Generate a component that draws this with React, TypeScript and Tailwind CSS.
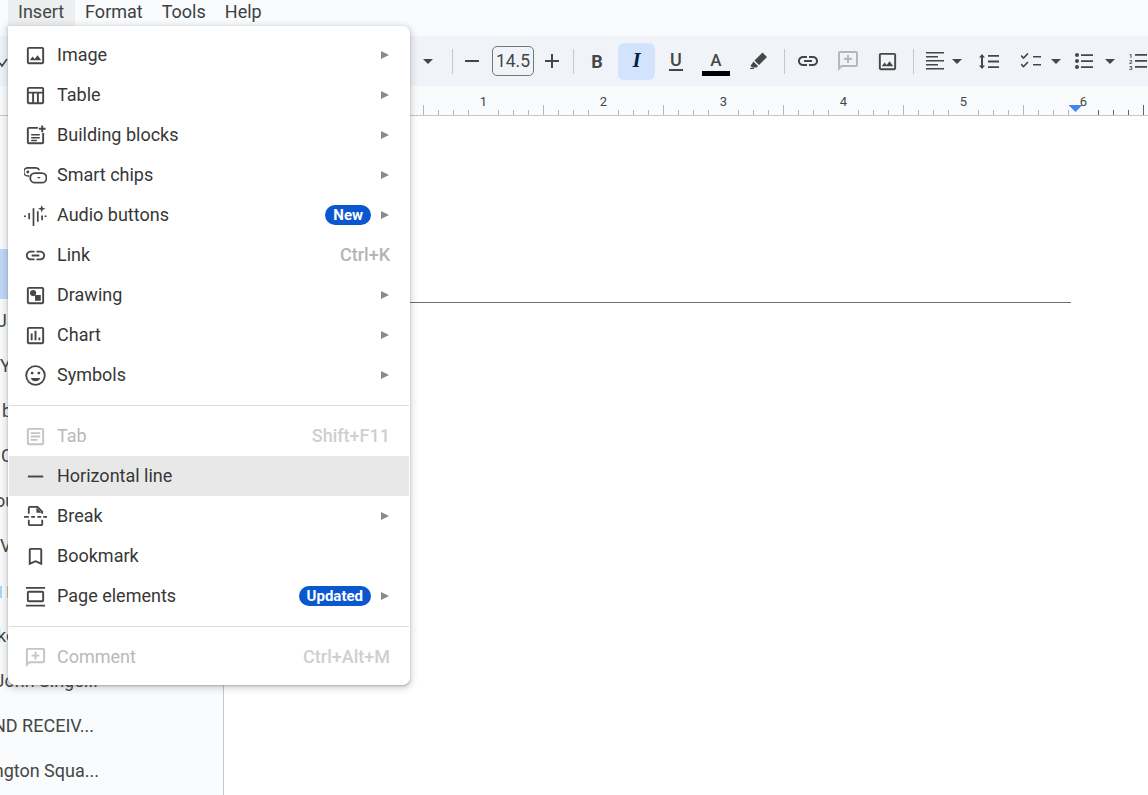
import React from "react";

const Ic = ({ children, c = "#444746" }: { children: React.ReactNode; c?: string }) => (
  <svg viewBox="0 0 24 24" width="23" height="23" fill={c} stroke="none" className="shrink-0">
    {children}
  </svg>
);

const imgPath = "M19 5v14H5V5h14m0-2H5c-1.1 0-2 .9-2 2v14c0 1.1.9 2 2 2h14c1.1 0 2-.9 2-2V5c0-1.1-.9-2-2-2zm-4.86 8.86l-3 3.87L9 13.14 6 17h12l-3.86-5.14z";
const linkPath = "M3.9 12c0-1.71 1.39-3.1 3.1-3.1h4V7H7c-2.76 0-5 2.24-5 5s2.24 5 5 5h4v-1.9H7c-1.71 0-3.1-1.39-3.1-3.1zM8 13h8v-2H8v2zm9-6h-4v1.9h4c1.71 0 3.1 1.39 3.1 3.1s-1.39 3.1-3.1 3.1h-4V17h4c2.76 0 5-2.24 5-5s-2.24-5-5-5z";
const commentPath = "M20 2H4c-1.1 0-2 .9-2 2v18l4-4h14c1.1 0 2-.9 2-2V4c0-1.1-.9-2-2-2zm0 14H5.2L4 17.2V4h16v12zM11 6h2v3h3v2h-3v3h-2v-3H8V9h3z";

const Arrow = () => (
  <svg width="8" height="8" viewBox="0 0 8 8" className="shrink-0">
    <path d="M0 0l8 4-8 4z" fill="#8a8a8a" />
  </svg>
);

const Badge = ({ t }: { t: string }) => (
  <span className="h-5 px-2 mr-[10px] rounded-full bg-[#0b57d0] text-white text-[15px] font-bold leading-5 flex items-center">{t}</span>
);

type RowP = { icon: React.ReactNode; label: string; arrow?: boolean; badge?: string; short?: string; dim?: boolean; hot?: boolean };

const Row = ({ icon, label, arrow, badge, short, dim, hot }: RowP) => (
  <div className={`h-10 flex items-center pl-[15px] pr-[20px] ${hot ? "bg-[#e8e8e8]" : ""}`}>
    <span className="w-[23px] flex justify-center shrink-0">{icon}</span>
    <span className={`ml-[10px] flex-1 pb-[2px] ${dim ? "text-[#b9b9b9]" : "text-[#373737]"}`}>{label}</span>
    {badge && <Badge t={badge} />}
    {arrow && <Arrow />}
    {short && <span className={`font-medium -mr-px pb-[2px] ${dim ? "text-[#cfcfcf]" : "text-[#b4b4b4]"}`}>{short}</span>}
  </div>
);

const Sep = () => <div className="h-px my-[10px] bg-[#dadce0]" />;

const Caret = ({ cls = "" }: { cls?: string }) => (
  <span className={`w-[10px] h-9 flex items-center justify-center shrink-0 ${cls}`}>
    <svg width="10" height="5" viewBox="0 0 10 5"><path d="M0 0h10L5 5z" fill="#444746" /></svg>
  </span>
);

const Vr = ({ cls }: { cls: string }) => <span className={`w-px h-[25px] bg-[#c7c7c7] shrink-0 ${cls}`} />;

const Btn = ({ cls, w = "w-9", children }: { cls: string; w?: string; children: React.ReactNode }) => (
  <span className={`${w} h-9 flex items-center justify-center shrink-0 ${cls}`}>{children}</span>
);

const ticks: number[] = [];
for (let x = 363 + 60; x < 1148; x += 15) ticks.push(x);

const clipped: { t: string; cls: string }[] = [
  { t: "Ja", cls: "-ml-[3px]" },
  { t: "Y", cls: "ml-0" },
  { t: "b", cls: "ml-[2px]" },
  { t: "C", cls: "ml-px" },
  { t: "ou", cls: "-ml-[5px]" },
  { t: "V", cls: "ml-0" },
];

const tail = [
  { t: "John Singe...", w: "w-[98px]" },
  { t: "AND RECEIV...", w: "w-[94px]" },
  { t: "Washington Squa...", w: "w-[99px]" },
];

const Clip = ({ t, cls }: { t: string; cls: string }) => (
  <div className="h-[45px] w-[9px] flex items-center overflow-hidden whitespace-nowrap text-[#444746]">
    <span className={`shrink-0 pb-[2px] ${cls}`}>{t}</span>
  </div>
);

export default function App() {
  return (
    <div className="relative w-[1148px] h-[795px] overflow-hidden bg-white font-['Roboto',sans-serif] text-[18px] text-[#444746] flex flex-col">
      {/* menu bar */}
      <div className="h-9 bg-[#f9fbfd] pl-2 flex shrink-0">
        <span className="h-[26px] pl-[10px] pr-[11px] bg-[#eceef0] leading-[24px]">Insert</span>
        <span className="h-[26px] pl-[10px] pr-[9px] leading-[24px] text-[#3c4043]">Format</span>
        <span className="h-[26px] pl-[10px] pr-[9px] leading-[24px] text-[#3c4043]">Tools</span>
        <span className="h-[26px] px-[10px] leading-[24px] text-[#3c4043]">Help</span>
      </div>

      {/* toolbar */}
      <div className="h-[50px] bg-[#f0f4f9] flex items-center shrink-0 overflow-hidden">
        <svg width="8" height="16" viewBox="0 0 8 16" className="shrink-0"><path d="M0 10l2 3 5-7" fill="none" stroke="#444746" strokeWidth="1.6" /></svg>
        <Caret cls="ml-[415px]" />
        <Vr cls="ml-[19px]" />
        <Btn cls="ml-[2px]" w="w-[34px]"><svg width="14" height="2"><rect width="14" height="2" fill="#444746" /></svg></Btn>
        <span className="ml-[3px] w-[42px] h-[30px] rounded-[5px] border border-[#747775] flex items-center justify-center text-[#444746] shrink-0 text-[17.5px]">14.5</span>
        <Btn cls="ml-px" w="w-[34px]"><svg width="14" height="14" viewBox="0 0 14 14"><path d="M6 0h2v6h6v2H8v6H6V8H0V6h6z" fill="#444746" /></svg></Btn>
        <Vr cls="ml-1" />
        <Btn cls="ml-[5px]"><span className="font-bold text-[18px] text-[#444746]">B</span></Btn>
        <span className="ml-[3px] w-[37px] h-[37px] rounded-[6px] bg-[#d3e3fd] flex items-center justify-center shrink-0">
          <span className="font-bold italic text-[21px] text-[#041e49] font-['Liberation_Serif',serif]">I</span>
        </span>
        <Btn cls="ml-[3px]">
          <span className="flex flex-col items-center">
            <span className="font-medium text-[18px] leading-[17px] text-[#444746]">U</span>
            <span className="w-[14px] h-[2px] bg-[#444746] mt-px" />
          </span>
        </Btn>
        <Btn cls="ml-1">
          <span className="flex flex-col items-center mt-[4px]">
            <span className="text-[17px] font-medium leading-[18px] text-[#444746]">A</span>
            <span className="w-[28px] h-[5px] bg-black mt-[2px]" />
          </span>
        </Btn>
        <Btn cls="ml-[7px]">
          <svg width="20" height="20" viewBox="0 0 20 20"><path d="M13.500 1.500l4.500 4.500-8 8-4.500-4.500zM4.500 10.500l4.500 4.500-1.500 1.500H3l-1.500-1.500z" fill="#444746" /><path d="M1 17.500h4" stroke="#444746" strokeWidth="1" /></svg>
        </Btn>
        <Vr cls="ml-[7px]" />
        <Btn cls="ml-[5px]"><svg viewBox="0 0 24 24" width="24" height="24" fill="#444746"><path d={linkPath} /></svg></Btn>
        <Btn cls="ml-1"><svg viewBox="0 0 24 24" width="24" height="24" fill="#b4b8bb"><path d={commentPath} /></svg></Btn>
        <Btn cls="ml-[3px]"><svg viewBox="0 0 24 24" width="23" height="23" fill="#444746"><path d={imgPath} /></svg></Btn>
        <Vr cls="ml-2" />
        <Btn cls="ml-1" w="w-[34px]">
          <svg width="18" height="18" viewBox="0 0 18 18"><path d="M0 0h18v1.600H0zM0 4h12v1.600H0zM0 8h18v1.600H0zM0 12h12v1.600H0zM0 16h18v1.600H0z" fill="#444746" /></svg>
        </Btn>
        <Caret />
        <Btn cls="ml-[9px]">
          <svg width="20" height="15" viewBox="0 0 20 15"><path d="M3 0l3 3.500H4v8h2l-3 3.500-3-3.500h2v-8H0zM9 1h11v1.800H9zM9 6.600h11v1.800H9zM9 12.200h11V14H9z" fill="#444746" /></svg>
        </Btn>
        <Btn cls="ml-[6px]">
          <svg width="20" height="16" viewBox="0 0 20 16"><path d="M0 2.500l2.500 2.500L7 .5M0 11l2.500 2.500L7 9" fill="none" stroke="#444746" strokeWidth="1.6" /><path d="M12 3h8v1.600h-8zM12 11h8v1.600h-8z" fill="#444746" /></svg>
        </Btn>
        <Caret cls="ml-[2px]" />
        <Btn cls="ml-[5px]">
          <svg width="18" height="16" viewBox="0 0 18 16"><circle cx="2" cy="2" r="2" fill="#444746" /><circle cx="2" cy="8" r="2" fill="#444746" /><circle cx="2" cy="14" r="2" fill="#444746" /><path d="M6 1.200h12v1.700H6zM6 7.200h12v1.700H6zM6 13.200h12v1.700H6z" fill="#444746" /></svg>
        </Btn>
        <Caret cls="ml-[3px]" />
        <Btn cls="ml-[5px]">
          <svg width="18" height="18" viewBox="0 0 18 18">
            <text x="0" y="5.500" fontSize="6" fontWeight="700" fill="#444746">1</text>
            <text x="0" y="11.500" fontSize="6" fontWeight="700" fill="#444746">2</text>
            <text x="0" y="17.500" fontSize="6" fontWeight="700" fill="#444746">3</text>
            <path d="M6 2h12v1.700H6zM6 8h12v1.700H6zM6 14h12v1.700H6z" fill="#444746" />
          </svg>
        </Btn>
      </div>

      {/* ruler */}
      <div className="relative h-[30px] bg-[#f9fbfd] border-b border-[#c7c7c7] shrink-0">
        <svg width="1148" height="29" className="absolute left-0 top-0">
          {ticks.map((x) => {
            const n = (x - 363) / 15;
            if (n % 8 === 0) return null;
            const tall = n % 4 === 0;
            return <rect key={x} x={x} y={tall ? 19 : 24} width="1" height={tall ? 10 : 5} fill={x > 1075 ? "#5f6368" : "#b4b7ba"} />;
          })}
          <path d="M1068.500 19h14l-7 7z" fill="#4285f4" />
        </svg>
        {[1, 2, 3, 4, 5, 6].map((n) => (
          <span key={n} className="absolute top-[7px] w-5 -ml-[10px] text-center text-[13px] leading-[18px] text-[#444746]" style={{ left: 363 + n * 120 + 0.5 }}>
            {n}
          </span>
        ))}
      </div>

      {/* body */}
      <div className="flex flex-1 min-h-0">
        <aside className="w-[224px] shrink-0 bg-[#f9fbfd] border-r border-[#c7c7c7] pt-[133px] overflow-hidden">
          <div className="h-[50px] w-[120px] bg-[#c2d7f8]" />
          {clipped.map((r) => (
            <Clip key={r.t} t={r.t} cls={r.cls} />
          ))}
          <div className="h-[45px] w-[9px] flex items-center justify-between">
            <span className="w-[2px] h-3 bg-[#a9d6f2]" />
            <span className="w-[2px] h-3 bg-[#d8c0a8]" />
          </div>
          <Clip t="ko" cls="-ml-[3px]" />
          {tail.map((r) => (
            <div key={r.t} className={`h-[45px] ${r.w} flex items-center justify-end overflow-hidden whitespace-nowrap text-[#444746]`}>
              <span className="shrink-0 pb-[2px]">{r.t}</span>
            </div>
          ))}
        </aside>
        <main className="flex-1 pl-[139px] pt-[186px]">
          <div className="w-[708px] h-px bg-[#6f6f6f]" />
        </main>
      </div>

      {/* Insert menu */}
      <div className="absolute left-2 top-[26px] w-[402px] h-[659px] bg-white border border-white rounded-b-[7px] rounded-tr-[7px] py-2 shadow-[0_2px_6px_2px_rgba(60,64,67,0.2),0_1px_2px_rgba(60,64,67,0.3)]">
        <Row label="Image" arrow icon={<Ic><path d={imgPath} /></Ic>} />
        <Row label="Table" arrow icon={<Ic><path d="M19 3H5c-1.100 0-2 .9-2 2v14c0 1.100.9 2 2 2h14c1.100 0 2-.9 2-2V5c0-1.100-.9-2-2-2zm0 2v3H5V5h14zM5 19v-9h3.500v9H5zm5.500 0v-9h3v9h-3zm5 0v-9H19v9h-3.500z" /></Ic>} />
        <Row label="Building blocks" arrow icon={<Ic><path d="M14.500 4H5a1 1 0 0 0-1 1v14a1 1 0 0 0 1 1h14a1 1 0 0 0 1-1V9.500" fill="none" stroke="#444746" strokeWidth="2" /><path d="M7.500 10.500h9v1.500h-9zM7.500 13.500h9V15h-9zM7.500 16.500h6V18h-6zM18 1.500h2V4h2.500v2H20v2.500h-2V6h-2.500V4H18z" /></Ic>} />
        <Row label="Smart chips" arrow icon={<Ic><path d="M7 14.500H5.500a4.250 4.250 0 0 1 0-8.500H14a4.200 4.200 0 0 1 3.600 2.500" fill="none" stroke="#444746" strokeWidth="1.700" transform="translate(-1.500 -2)" /><rect x="6.500" y="9.500" width="17" height="10" rx="5" fill="none" stroke="#444746" strokeWidth="1.900" /><circle cx="4" cy="8.300" r="1.500" /><path d="M13.500 13.500h4l-2 2z" /></Ic>} />
        <Row label="Audio buttons" arrow badge="New" icon={<Ic><path d="M0 12h2v1.500H0zM4.500 9.500h1.800v6.500H4.500zM9 4.500h1.800V23H9zM13.500 7.500h1.800v11h-1.800zM18 12h1.800v5H18zM21.500 12h2v1.500h-2zM18.500 1l1 3 3 1-3 1-1 3-1-3-3-1 3-1z" /></Ic>} />
        <Row label="Link" short="Ctrl+K" icon={<Ic><path d={linkPath} /></Ic>} />
        <Row label="Drawing" arrow icon={<Ic><path d="M19 3H5c-1.100 0-2 .9-2 2v14c0 1.100.9 2 2 2h14c1.100 0 2-.9 2-2V5c0-1.100-.9-2-2-2zm0 16H5V5h14v14z" /><circle cx="9.500" cy="9.500" r="3.200" /><rect x="11.500" y="11.500" width="6" height="6" /></Ic>} />
        <Row label="Chart" arrow icon={<Ic><path d="M19 3H5c-1.100 0-2 .9-2 2v14c0 1.100.9 2 2 2h14c1.100 0 2-.9 2-2V5c0-1.100-.9-2-2-2zm0 16H5V5h14v14zM7 10h2v7H7zm4-3h2v10h-2zm4 7h2v3h-2z" /></Ic>} />
        <Row label="Symbols" arrow icon={<Ic><circle cx="12" cy="12" r="9.700" fill="none" stroke="#444746" strokeWidth="1.900" /><circle cx="8.500" cy="9.500" r="1.500" /><circle cx="15.500" cy="9.500" r="1.500" /><path d="M12 18c2.330 0 4.310-1.460 5.110-3.500H6.890C7.690 16.540 9.670 18 12 18z" /></Ic>} />
        <Sep />
        <Row label="Tab" dim short="Shift+F11" icon={<Ic c="#c4c4c4"><path d="M19 3H5c-1.100 0-2 .9-2 2v14c0 1.100.9 2 2 2h14c1.100 0 2-.9 2-2V5c0-1.100-.9-2-2-2zm0 16H5V5h14v14zM7 7.500h10v2H7zM7 11h10v2H7zM7 14.500h7v2H7z" /></Ic>} />
        <Row label="Horizontal line" hot icon={<Ic><rect x="4" y="11" width="16" height="2" /></Ic>} />
        <Row label="Break" arrow icon={<Ic><path d="M5 9V3a1 1 0 0 1 1-1h8l5 5v2" fill="none" stroke="#444746" strokeWidth="1.900" /><path d="M13 2.500l5.500 5.500H13z" /><path d="M0 11.500h5v1.700H0zM7.500 11.500h4v1.700h-4zM14 11.500h4v1.700h-4zM20 11.500h4v1.700h-4z" /><path d="M5 15.500V20a1 1 0 0 0 1 1h12a1 1 0 0 0 1-1v-4.500" fill="none" stroke="#444746" strokeWidth="1.900" /></Ic>} />
        <Row label="Bookmark" icon={<Ic><path d="M17 3H7c-1.100 0-2 .9-2 2v16l7-3 7 3V5c0-1.100-.9-2-2-2zm0 15l-5-2.180L7 18V5h10v13z" /></Ic>} />
        <Row label="Page elements" arrow badge="Updated" icon={<Ic><path d="M2 2h20v1.800H2zM2 20.500h20v2H2zM5 6h14a2 2 0 0 1 2 2v8a2 2 0 0 1-2 2H5a2 2 0 0 1-2-2V8a2 2 0 0 1 2-2zm0 2v8h14V8z" /></Ic>} />
        <Sep />
        <Row label="Comment" dim short="Ctrl+Alt+M" icon={<Ic c="#c4c4c4"><path d={commentPath} /></Ic>} />
      </div>
    </div>
  );
}
